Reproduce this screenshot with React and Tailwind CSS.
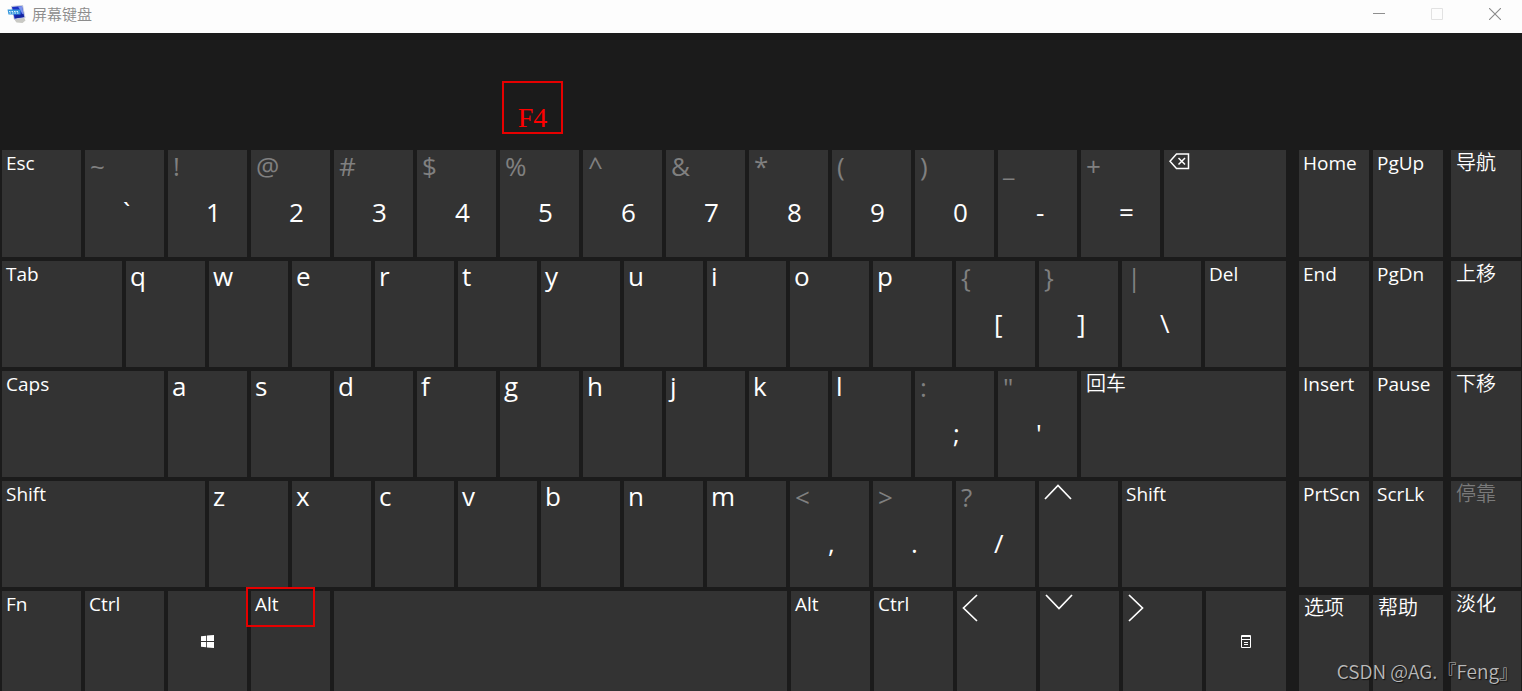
import React from 'react';
import clsx from 'clsx';

const UNIT = 'grow-[79]';

const chars = (text) => [...text].map((main) => ({ main }));
const pairs = (list) => list.map(([shifted, main]) => ({ shifted, main }));

const ROWS = [
  [
    { label: 'Esc' },
    ...pairs([
      ['~', '`'], ['!', '1'], ['@', '2'], ['#', '3'], ['$', '4'], ['%', '5'], ['^', '6'],
      ['&', '7'], ['*', '8'], ['(', '9'], [')', '0'], ['_', '-'], ['+', '='],
    ]),
    { icon: 'backspace', name: 'Backspace', grow: 'grow-[122]' },
  ],
  [
    { label: 'Tab', grow: 'grow-[120]' },
    ...chars('qwertyuiop'),
    ...pairs([['{', '['], ['}', ']'], ['|', '\\']]),
    { label: 'Del', grow: 'grow-[81]' },
  ],
  [
    { label: 'Caps', grow: 'grow-[162]' },
    ...chars('asdfghjkl'),
    ...pairs([[':', ';'], ['"', "'"]]),
    { label: '回车', cjk: true, grow: 'grow-[205]' },
  ],
  [
    { label: 'Shift', grow: 'grow-[203]' },
    ...chars('zxcvbnm'),
    ...pairs([['<', ','], ['>', '.'], ['?', '/']]),
    { icon: 'up', name: 'Up' },
    { label: 'Shift', grow: 'grow-[164]' },
  ],
  [
    { label: 'Fn' },
    { label: 'Ctrl' },
    { icon: 'windows', name: 'Windows', centered: true },
    { label: 'Alt', marked: true },
    { name: 'Space', grow: 'grow-[453]' },
    { label: 'Alt' },
    { label: 'Ctrl' },
    { icon: 'left', name: 'Left' },
    { icon: 'down', name: 'Down' },
    { icon: 'right', name: 'Right' },
    { icon: 'menu', name: 'Menu', centered: true, grow: 'grow-[80]' },
  ],
];

const NAV_ROWS = [
  [{ label: 'Home' }, { label: 'PgUp' }],
  [{ label: 'End' }, { label: 'PgDn' }],
  [{ label: 'Insert' }, { label: 'Pause' }],
  [{ label: 'PrtScn' }, { label: 'ScrLk' }],
  [{ label: '选项', cjk: true }, { label: '帮助', cjk: true }],
];

const SIDE_KEYS = [
  { label: '导航', cjk: true },
  { label: '上移', cjk: true },
  { label: '下移', cjk: true },
  { label: '停靠', cjk: true, disabled: true },
  { label: '淡化', cjk: true },
];

const ROW_TRACKS = 'grid grid-rows-[107fr_106fr_106fr_106fr_100fr] gap-1';

function KeyIcon({ name }) {
  switch (name) {
    case 'backspace':
      return (
        <svg width="21" height="17" viewBox="0 0 21 17" fill="none" stroke="currentColor" strokeWidth="1.5">
          <path d="M7.5 1h12v14.5h-12L1 8.25z" />
          <path d="M9.5 5l6.5 6.5M16 5l-6.5 6.5" />
        </svg>
      );
    case 'up':
      return (
        <svg width="28" height="16" viewBox="0 0 28 16" fill="none" stroke="currentColor" strokeWidth="1.7">
          <path d="M1 15L14 1.5 27 15" />
        </svg>
      );
    case 'down':
      return (
        <svg width="28" height="16" viewBox="0 0 28 16" fill="none" stroke="currentColor" strokeWidth="1.7">
          <path d="M1 1l13 13.5L27 1" />
        </svg>
      );
    case 'left':
      return (
        <svg width="16" height="28" viewBox="0 0 16 28" fill="none" stroke="currentColor" strokeWidth="1.7">
          <path d="M15 1L1.5 14 15 27" />
        </svg>
      );
    case 'right':
      return (
        <svg width="16" height="28" viewBox="0 0 16 28" fill="none" stroke="currentColor" strokeWidth="1.7">
          <path d="M1 1l13.5 13L1 27" />
        </svg>
      );
    case 'windows':
      return (
        <svg width="13" height="13" viewBox="0 0 13 13" fill="currentColor">
          <path d="M0 1.2L5.2 .7V6H0zM6 .6L13 0v6H6zM0 7h5.2v5.3L0 11.8zM6 7h7v6l-7-.6z" />
        </svg>
      );
    case 'menu':
      return (
        <svg width="10" height="13" viewBox="0 0 10 13" fill="none" stroke="currentColor">
          <path d="M.5 .5h9v12h-9zM.5 1.5h9M.5 4.5h9M3 7.5h4M3 9.5h4" />
        </svg>
      );
    default:
      return null;
  }
}

function Key({ label, main, shifted, icon, name, cjk, centered, disabled, marked, grow = UNIT }) {
  return (
    <button
      type="button"
      aria-label={name}
      disabled={disabled}
      className={clsx(
        'relative flex min-w-0 basis-0 flex-col bg-[#333333] text-left whitespace-nowrap',
        disabled ? 'text-[#7a7a7a]' : 'text-white',
        centered ? 'items-center justify-center' : 'items-start',
        grow
      )}
    >
      {label && (
        <span className={clsx(cjk ? 'pt-px pl-[5px] text-xl leading-6 font-[350]' : 'pl-1 text-[19px] leading-[26px]')}>
          {label}
        </span>
      )}
      {shifted && <span className="pl-[5px] text-[26px] leading-8 text-[#808080]">{shifted}</span>}
      {main && (
        <span className={clsx('text-[26px]', shifted ? 'mt-[14px] pl-[38px] leading-8' : 'pl-1 leading-[30px]')}>
          {main}
        </span>
      )}
      {icon && (
        <span className={clsx('block', !centered && 'pt-[3px] pl-[5px]')}>
          <KeyIcon name={icon} />
        </span>
      )}
      {main === '5' && (
        <span className="absolute bottom-full left-0.5 mb-4 flex h-[53px] w-[61px] items-end justify-center border-2 border-[#e60000] font-['Liberation_Serif',serif] text-[28px] leading-7 text-[#ff0000]">
          F4
        </span>
      )}
      {marked && (
        <span className="absolute -top-1 -left-[5px] z-10 h-10 w-[69px] border-2 border-[#e60000]" />
      )}
    </button>
  );
}

function AppLogo() {
  return (
    <svg width="20" height="20" viewBox="0 0 20 20">
      <path d="M8 15l9-1.500 1.500 3-3 2.500-6-.5-1.500-2z" fill="#c9c9c4" />
      <path d="M4 2L16 1l2.500 13L7 16z" fill="#c3c8da" />
      <path d="M5 3l10-1 2.200 11L7.500 14.500z" fill="#1b2fc4" />
      <path d="M11 2.400L15 2l2.200 11z" fill="#7c93ee" />
      <path d="M9 11l7.500-1 .7 3-9.700 1.500z" fill="#1524a0" />
      <path d="M.5 5.500h13v5H1.500z" fill="#3597dc" />
      <path d="M2 7.500h10M2.500 9h9" stroke="#dff2ff" strokeDasharray="1.500 1" />
    </svg>
  );
}

function TitleBar() {
  return (
    <header className="flex h-[33px] items-start justify-between bg-[#fdfdfd] pl-[7px]">
      <div className="flex h-7 items-center gap-[5px]">
        <AppLogo />
        <h1 className="text-[15px] leading-5 font-[350] text-[#8c8c8c]">屏幕键盘</h1>
      </div>
      <div className="flex gap-1">
        <button type="button" aria-label="最小化" className="flex h-7 w-[54px] items-center justify-center">
          <svg width="12" height="12" viewBox="0 0 12 12" stroke="#8f8f8f">
            <path d="M0 5.5h12" />
          </svg>
        </button>
        <button type="button" aria-label="最大化" disabled className="flex h-7 w-[54px] items-center justify-center">
          <svg width="12" height="12" viewBox="0 0 12 12" fill="none" stroke="#e2e2e2">
            <path d="M.5 .5h11v11H.5z" />
          </svg>
        </button>
        <button type="button" aria-label="关闭" className="flex h-7 w-[54px] items-center justify-center">
          <svg width="12" height="12" viewBox="0 0 12 12" stroke="#8a8a8a" strokeWidth="1.1">
            <path d="M0 0l12 12M12 0L0 12" />
          </svg>
        </button>
      </div>
    </header>
  );
}

export default function App() {
  return (
    <div className="relative flex min-h-screen flex-col bg-[#1b1b1b] font-['Open_Sans','Noto_Sans_CJK_SC',sans-serif]">
      <TitleBar />
      <main className="flex flex-1 pt-[117px] pr-px pl-0.5">
        <div className={clsx(ROW_TRACKS, 'min-w-0 grow-[1284] basis-0')}>
          {ROWS.map((row, i) => (
            <div key={i} className="flex gap-1">
              {row.map((item, j) => (
                <Key key={j} {...item} />
              ))}
            </div>
          ))}
        </div>
        <div className={clsx(ROW_TRACKS, 'ml-[13px] min-w-0 grow-[144] basis-0')}>
          {NAV_ROWS.map((row, i) => (
            <div key={i} className="flex gap-1 last:pt-1">
              {row.map((item) => (
                <Key key={item.label} {...item} />
              ))}
            </div>
          ))}
        </div>
        <div className={clsx(ROW_TRACKS, 'ml-2 min-w-0 grow-[70] basis-0')}>
          {SIDE_KEYS.map((item) => (
            <Key key={item.label} {...item} />
          ))}
        </div>
      </main>
      <p className="absolute right-1 bottom-2 font-['Noto_Sans_CJK_SC',sans-serif] text-[19px] leading-6 font-[350] text-[#b8b8b8] text-shadow-[1px_1px_1px_#111111]">
        CSDN @AG.『Feng』
      </p>
    </div>
  );
}
